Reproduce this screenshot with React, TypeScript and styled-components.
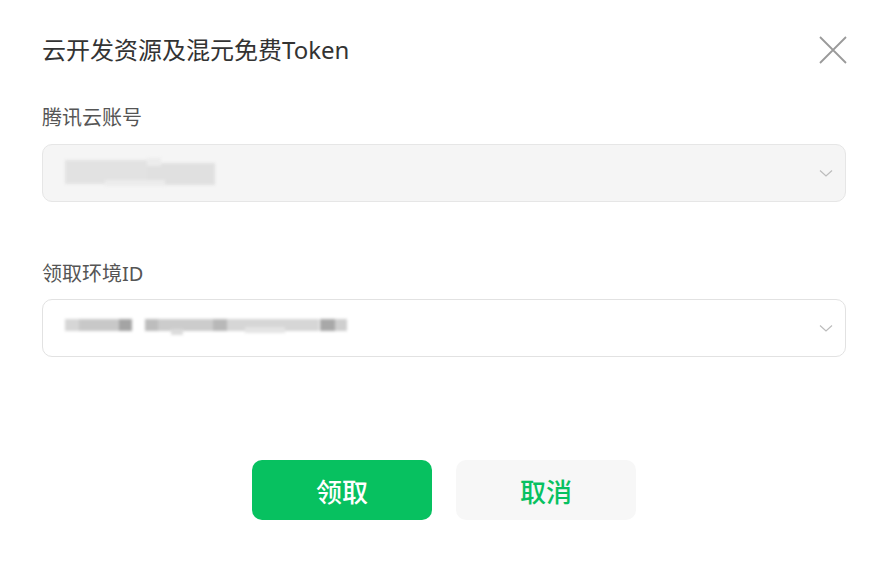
import React from "react";
import styled, { createGlobalStyle } from "styled-components";

const GlobalStyle = createGlobalStyle`
  html, body {
    margin: 0;
    padding: 0;
    background: #ffffff;
  }
  body {
    font-family: "Noto Sans", "Noto Sans CJK SC", sans-serif;
    -webkit-font-smoothing: antialiased;
  }
  * { box-sizing: border-box; }
`;

const Dialog = styled.div`
  width: 885px;
  height: 561px;
  padding: 34px 39px 0 42px;
  display: flex;
  flex-direction: column;
  background: #fff;
`;

const Header = styled.div`
  display: flex;
  align-items: center;
  justify-content: space-between;
  height: 32px;
`;

const Title = styled.h1`
  margin: 0;
  font-size: 24px;
  line-height: 32px;
  font-weight: 400;
  color: #333;
`;

const CloseButton = styled.button`
  width: 28px;
  height: 28px;
  padding: 0;
  margin-right: -1px;
  border: none;
  background: transparent;
  display: flex;
  align-items: center;
  justify-content: center;
  cursor: pointer;
`;

const Field = styled.div<{ $top: number; $gap: number }>`
  display: flex;
  flex-direction: column;
  gap: ${(p) => p.$gap}px;
  margin-top: ${(p) => p.$top}px;
`;

const Label = styled.label`
  font-size: 20px;
  line-height: 28px;
  color: #555;
`;

const SelectBox = styled.div<{ $disabled?: boolean }>`
  height: 58px;
  border-radius: 10px;
  border: 1px solid ${(p) => (p.$disabled ? "#e6e6e6" : "#e2e2e2")};
  background: ${(p) => (p.$disabled ? "#f5f5f5" : "#ffffff")};
  display: flex;
  align-items: center;
  justify-content: space-between;
  padding: 0 11px 0 22px;
`;

const Masked = styled.div`
  position: relative;
  height: 30px;
  flex: 1;
  filter: blur(1.6px);
`;

const MaskBlock = styled.span`
  position: absolute;
  display: block;
`;

const Chevron = styled.svg`
  width: 16px;
  height: 16px;
  flex-shrink: 0;
`;

const Actions = styled.div`
  display: flex;
  justify-content: center;
  gap: 24px;
  margin-top: 103px;
`;

const Button = styled.button<{ $primary?: boolean }>`
  width: 180px;
  height: 60px;
  border: none;
  border-radius: 10px;
  font-family: "Noto Sans CJK SC", sans-serif;
  font-size: 26px;
  font-weight: 500;
  background: ${(p) => (p.$primary ? "#07c160" : "#f7f7f7")};
  color: ${(p) => (p.$primary ? "#ffffff" : "#07c160")};
  cursor: pointer;
`;

type Block = { x: number; y: number; w: number; h: number; c: string };

// blurred account name
const accountBlocks: Block[] = [
  { x: 0, y: 2, w: 82, h: 24, c: "#e2e2e2" },
  { x: 82, y: 5, w: 68, h: 22, c: "#e0e0e0" },
  { x: 82, y: 0, w: 14, h: 8, c: "#ececec" },
  { x: 40, y: 22, w: 60, h: 6, c: "#ececec" },
];

// blurred environment id
const envBlocks: Block[] = [
  { x: 0, y: 6, w: 14, h: 12, c: "#d6d6d6" },
  { x: 14, y: 6, w: 40, h: 12, c: "#c8c8c8" },
  { x: 54, y: 6, w: 13, h: 12, c: "#a4a4a4" },
  { x: 80, y: 6, w: 13, h: 12, c: "#bdbdbd" },
  { x: 93, y: 6, w: 55, h: 12, c: "#cccccc" },
  { x: 106, y: 16, w: 12, h: 6, c: "#dcdcdc" },
  { x: 148, y: 6, w: 14, h: 12, c: "#b8b8b8" },
  { x: 162, y: 6, w: 92, h: 12, c: "#d6d6d6" },
  { x: 180, y: 14, w: 40, h: 6, c: "#e4e4e4" },
  { x: 255, y: 6, w: 15, h: 12, c: "#a8a8a8" },
  { x: 270, y: 6, w: 12, h: 12, c: "#cfcfcf" },
];

const Mask = ({ blocks }: { blocks: Block[] }) => (
  <Masked>
    {blocks.map((b, i) => (
      <MaskBlock
        key={i}
        style={{ left: b.x, top: b.y, width: b.w, height: b.h, background: b.c }}
      />
    ))}
  </Masked>
);

const Arrow = () => (
  <Chevron viewBox="0 0 16 16" fill="none">
    <path d="M2 5.5 L8 11 L14 5.5" stroke="#bcbcbc" strokeWidth="1.2" />
  </Chevron>
);

export default function App() {
  return (
    <>
      <GlobalStyle />
      <Dialog>
        <Header>
          <Title>云开发资源及混元免费Token</Title>
          <CloseButton aria-label="关闭">
            <svg width="28" height="28" viewBox="0 0 28 28">
              <path d="M1 1 L27 27 M27 1 L1 27" stroke="#9a9a9a" strokeWidth="1.8" />
            </svg>
          </CloseButton>
        </Header>

        <Field $top={38} $gap={12}>
          <Label>腾讯云账号</Label>
          <SelectBox $disabled>
            <Mask blocks={accountBlocks} />
            <Arrow />
          </SelectBox>
        </Field>

        <Field $top={58} $gap={11}>
          <Label>领取环境ID</Label>
          <SelectBox>
            <Mask blocks={envBlocks} />
            <Arrow />
          </SelectBox>
        </Field>

        <Actions>
          <Button $primary>领取</Button>
          <Button>取消</Button>
        </Actions>
      </Dialog>
    </>
  );
}
